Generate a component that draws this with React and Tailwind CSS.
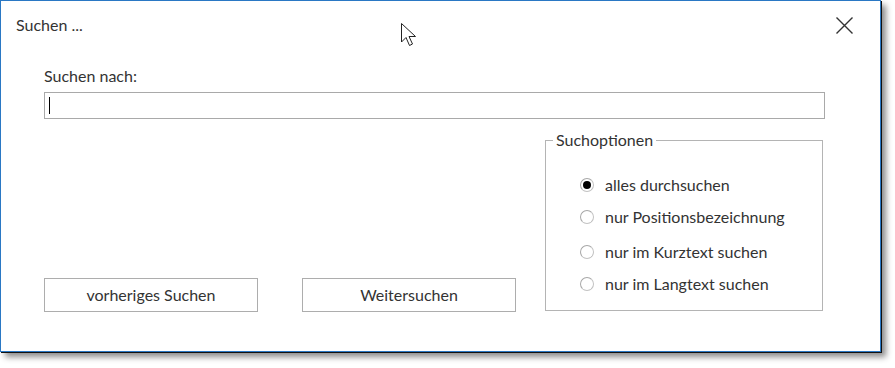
const options = [
  'alles durchsuchen',
  'nur Positionsbezeichnung',
  'nur im Kurztext suchen',
  'nur im Langtext suchen',
]

// spacing between the radio rows is not even in the original dialog
const rowGaps = ['mt-0', 'mt-[12px]', 'mt-[15px]', 'mt-[12px]']

function Radio({ checked }) {
  return (
    <span className="w-[14px] h-[14px] rounded-full border border-[#c2c2c2] border-t-[#a8a8a8] border-l-[#a8a8a8] bg-white flex items-center justify-center shrink-0">
      {checked && <span className="w-[8px] h-[8px] rounded-full bg-black" />}
    </span>
  )
}

export default function App() {
  return (
    <div className="w-[895px] h-[368px] bg-white font-['Lato',sans-serif] text-[16px] text-[#333]">
      <div className="relative w-[881px] h-[352px] border border-[#2a78c4] bg-white shadow-[1px_1px_0_#111,5px_5px_6px_rgba(0,0,0,0.45)] flex flex-col">
        <div className="h-[48px] flex items-center justify-between pl-[15px] pr-[27px]">
          <span className="leading-none">Suchen ...</span>
          <svg width="17" height="17" viewBox="0 0 17 17" className="text-[#333]">
            <path d="M0.5 0.5 L16.5 16.5 M16.5 0.5 L0.5 16.5" stroke="currentColor" strokeWidth="1.4" />
          </svg>
        </div>

        <div className="px-[43px] flex flex-col">
          <label className="mt-[17px] leading-[20px]">Suchen nach:</label>
          <div className="mt-[6px] w-[781px] h-[27px] border border-[#a9a9a9] flex items-center pl-[4px]">
            <span className="w-px h-[17px] bg-black" />
          </div>

          <div className="mt-[13px] w-[781px] flex justify-between items-start">
            <div className="flex gap-[44px] mt-[146px]">
              <button className="w-[214px] h-[34px] border border-[#adadad] bg-white text-[16px] text-[#333]">
                vorheriges Suchen
              </button>
              <button className="w-[214px] h-[34px] border border-[#adadad] bg-white text-[16px] text-[#333]">
                Weitersuchen
              </button>
            </div>

            <fieldset className="w-[278px] h-[179px] border border-[#b4b4b4] mr-[2px] pl-[34px] pt-[27px]">
              <legend className="-ml-[27px] px-[3px] leading-[16px]">Suchoptionen</legend>
              <div className="flex flex-col">
                {options.map((o, i) => (
                  <div key={o} className={`flex items-center gap-[11px] h-[20px] ${rowGaps[i]}`}>
                    <Radio checked={i === 0} />
                    <span>{o}</span>
                  </div>
                ))}
              </div>
            </fieldset>
          </div>
        </div>

        <svg
          className="absolute left-[399px] top-[21px]"
          width="20"
          height="28"
          viewBox="0 0 20 28"
        >
          <path
            d="M1.5 1.5 L1.5 20 L6 15.5 L9.5 23.5 L12.5 22 L9 14.5 L15.5 14.5 Z"
            fill="white"
            stroke="#222"
            strokeWidth="1"
            strokeLinejoin="round"
          />
        </svg>
      </div>
    </div>
  )
}
